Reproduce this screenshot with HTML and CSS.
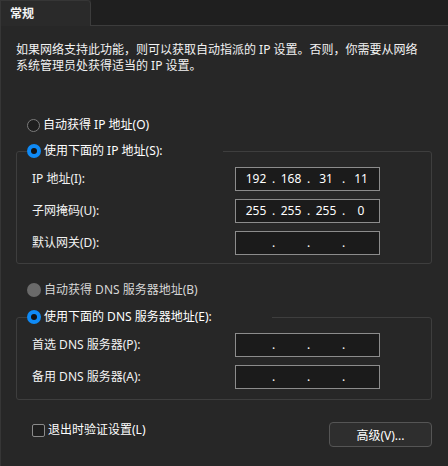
FILE: index.html
```html
<!DOCTYPE html>
<html lang="zh-CN">
<head>
<meta charset="utf-8">
<title>常规</title>
<link rel="stylesheet" href="styles.css">
</head>
<body>
<div class="window">
  <div class="tabs">
    <div class="tab">常规</div>
    <div class="tab-rest"></div>
  </div>
  <div class="panel">
    <p class="desc">如果网络支持此功能，则可以获取自动指派的 IP 设置。否则，你需要从网络<br>系统管理员处获得适当的 IP 设置。</p>

    <div class="radio-row first">
      <span class="radio"></span><span class="rtext">自动获得 IP 地址(O)</span>
    </div>

    <fieldset class="group g-ip">
      <legend class="legend">
        <span class="radio checked"></span><span class="rtext">使用下面的 IP 地址(S):</span>
      </legend>
      <div class="grid">
        <div class="lbl">IP 地址(I):</div>
        <div class="ip"><span class="seg">192</span><span class="dot">.</span><span class="seg">168</span><span class="dot">.</span><span class="seg">31</span><span class="dot">.</span><span class="seg">11</span></div>
        <div class="lbl">子网掩码(U):</div>
        <div class="ip"><span class="seg">255</span><span class="dot">.</span><span class="seg">255</span><span class="dot">.</span><span class="seg">255</span><span class="dot">.</span><span class="seg">0</span></div>
        <div class="lbl">默认网关(D):</div>
        <div class="ip"><span class="seg"></span><span class="dot">.</span><span class="seg"></span><span class="dot">.</span><span class="seg"></span><span class="dot">.</span><span class="seg"></span></div>
      </div>
    </fieldset>

    <div class="radio-row dns-auto">
      <span class="radio disabled"></span><span class="rtext dim">自动获得 DNS 服务器地址(B)</span>
    </div>

    <fieldset class="group g-dns">
      <legend class="legend">
        <span class="radio checked"></span><span class="rtext">使用下面的 DNS 服务器地址(E):</span>
      </legend>
      <div class="grid">
        <div class="lbl">首选 DNS 服务器(P):</div>
        <div class="ip"><span class="seg"></span><span class="dot">.</span><span class="seg"></span><span class="dot">.</span><span class="seg"></span><span class="dot">.</span><span class="seg"></span></div>
        <div class="lbl">备用 DNS 服务器(A):</div>
        <div class="ip"><span class="seg"></span><span class="dot">.</span><span class="seg"></span><span class="dot">.</span><span class="seg"></span><span class="dot">.</span><span class="seg"></span></div>
      </div>
    </fieldset>

    <div class="footer">
      <div class="check-row">
        <span class="checkbox"></span><span class="rtext">退出时验证设置(L)</span>
      </div>
      <button class="btn">高级(V)...</button>
    </div>
  </div>
</div>
</body>
</html>
```

FILE: styles.css
```css
html, body {
  margin: 0;
  padding: 0;
  background: #272727;
}
body {
  width: 448px;
  height: 466px;
  overflow: hidden;
  font-family: "Noto Sans", "Noto Sans CJK SC", sans-serif;
  font-size: 12px;
  color: #ffffff;
}
.window {
  width: 448px;
  height: 466px;
  box-sizing: border-box;
  border-left: 1px solid #363636;
  display: flex;
  flex-direction: column;
}
.tabs {
  display: flex;
  height: 26px;
  flex: none;
  margin-left: -1px;
}
.tab {
  width: 91px;
  height: 26px;
  box-sizing: border-box;
  background: #2a2a2a;
  border-top: 1px solid #363636;
  border-left: 1px solid #363636;
  border-right: 1px solid #3c3c3c;
  border-top-right-radius: 4px;
  padding-left: 9px;
  font-family: "Noto Sans CJK SC", sans-serif;
  font-weight: 700;
  font-size: 12px;
  line-height: 24px;
  color: #f4f4f4;
}
.tab-rest {
  flex: 1;
  background: #1f1f1f;
  border-bottom: 1px solid #3c3c3c;
}
.panel {
  flex: 1;
  padding: 16px 16px 0 15px;
  background: #272727;
}
.desc {
  margin: 0;
  line-height: 16px;
  white-space: nowrap;
  color: #f2f2f2;
}
.radio-row {
  display: flex;
  align-items: center;
  height: 20px;
  margin-left: 11px;
}
.radio-row.first { margin-top: 41px; }
.radio-row.dns-auto { margin-top: 16px; }
.radio {
  width: 13px;
  height: 13px;
  box-sizing: border-box;
  border-radius: 50%;
  border: 1px solid #7c7c7c;
  background: #1e1e1e;
  margin-right: 3px;
  flex: none;
  position: relative;
}
.radio.checked {
  border: none;
  background: #0f8af5;
  width: 14px;
  height: 14px;
}
.radio.checked::after {
  content: "";
  position: absolute;
  left: 4px;
  top: 4px;
  width: 6px;
  height: 6px;
  border-radius: 50%;
  background: #121212;
}
.radio.disabled {
  border: none;
  background: #6a6a6a;
  width: 14px;
  height: 14px;
}
.rtext {
  line-height: 20px;
  white-space: nowrap;
}
.rtext.dim { color: #d6d6d6; }
.group {
  margin: 6px 0 0 0;
  padding: 6px 15px 8px 15px;
  border: 1px solid #3e3e3e;
  border-radius: 3px;
  min-inline-size: 0;
}
.g-dns {
  margin-top: 7px;
  padding-bottom: 10px;
}
.legend {
  display: flex;
  align-items: center;
  height: 20px;
  padding: 0 60px 0 0;
  margin-left: -5px;
}
.grid {
  display: grid;
  grid-template-columns: 203px 145px;
  row-gap: 8px;
  align-items: center;
}
.lbl {
  line-height: 20px;
  white-space: nowrap;
  color: #f2f2f2;
}
.ip {
  height: 24px;
  box-sizing: border-box;
  border: 1px solid #8c8c8c;
  background: #1b1b1b;
  padding-left: 5px;
  display: flex;
  align-items: center;
  font-size: 12px;
  line-height: 22px;
  color: #ffffff;
}
.seg {
  width: 30px;
  text-align: center;
}
.dot {
  width: 5px;
  text-align: center;
}
.footer {
  display: flex;
  justify-content: space-between;
  align-items: flex-start;
  margin-top: 20px;
}
.check-row {
  display: flex;
  align-items: center;
  height: 20px;
  margin-left: 16px;
}
.checkbox {
  width: 13px;
  height: 13px;
  box-sizing: border-box;
  border: 1px solid #8a8a8a;
  border-radius: 2px;
  background: #1e1e1e;
  margin-right: 3px;
}
.btn {
  margin-top: 2px;
  width: 103px;
  height: 25px;
  box-sizing: border-box;
  border: 1px solid #555555;
  border-radius: 4px;
  background: #2e2e2e;
  color: #ffffff;
  font-family: "Noto Sans", "Noto Sans CJK SC", sans-serif;
  font-size: 12px;
  padding: 0;
}
```
